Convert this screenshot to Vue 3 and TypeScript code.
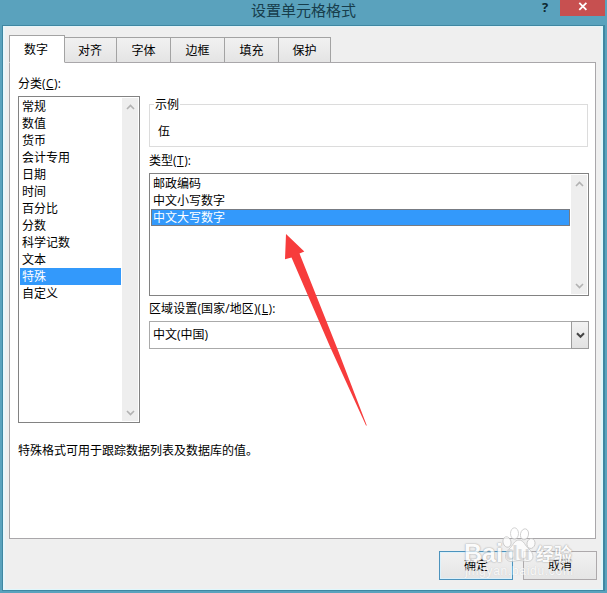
<script setup lang="ts">
import { ref } from 'vue'

interface Tab { label: string; width: number }

const tabs: Tab[] = [
  { label: '数字', width: 56 },
  { label: '对齐', width: 53 },
  { label: '字体', width: 54 },
  { label: '边框', width: 54 },
  { label: '填充', width: 54 },
  { label: '保护', width: 52 },
]
const categories: string[] = [
  '常规', '数值', '货币', '会计专用', '日期', '时间', '百分比',
  '分数', '科学记数', '文本', '特殊', '自定义',
]
const types: string[] = ['邮政编码', '中文小写数字', '中文大写数字']

const activeTab = ref('数字')
const category = ref('特殊')
const numberType = ref('中文大写数字')
</script>

<template>
  <div class="window">
    <header class="titlebar">
      <h1 class="title">设置单元格格式</h1>
      <div class="controls">
        <span class="help">?</span>
        <button class="close" type="button">
          <svg width="10" height="9" viewBox="0 0 10 9"><path d="M1.3 .8 8.4 7.9M8.4 .8 1.3 7.9" /></svg>
        </button>
      </div>
    </header>

    <main class="client">
      <nav class="tabs">
        <button
          v-for="tab in tabs"
          :key="tab.label"
          type="button"
          class="tab"
          :class="{ active: tab.label === activeTab }"
          :style="{ width: tab.width + 'px' }"
          @click="activeTab = tab.label"
        >{{ tab.label }}</button>
      </nav>

      <section class="panel">
        <div class="columns">
          <div class="left">
            <div class="label">分类(<u>C</u>):</div>
            <div class="listbox categories">
              <ul>
                <li
                  v-for="item in categories"
                  :key="item"
                  :class="{ selected: item === category }"
                  @click="category = item"
                >{{ item }}</li>
              </ul>
              <div class="scroll">
                <svg width="9" height="6" viewBox="0 0 9 6"><path d="M1 5 4.5 1.4 8 5" /></svg>
                <svg width="9" height="6" viewBox="0 0 9 6"><path d="M1 1 4.5 4.6 8 1" /></svg>
              </div>
            </div>
          </div>

          <div class="right">
            <fieldset class="sample">
              <legend>示例</legend>
              <div class="value">伍</div>
            </fieldset>
            <div class="label type-label">类型(<u>T</u>):</div>
            <div class="listbox types">
              <ul>
                <li
                  v-for="item in types"
                  :key="item"
                  :class="{ selected: item === numberType }"
                  @click="numberType = item"
                >{{ item }}</li>
              </ul>
              <div class="scroll">
                <svg width="9" height="6" viewBox="0 0 9 6"><path d="M1 5 4.5 1.4 8 5" /></svg>
                <svg width="9" height="6" viewBox="0 0 9 6"><path d="M1 1 4.5 4.6 8 1" /></svg>
              </div>
            </div>
            <div class="label locale-label">区域设置(国家/地区)(<u>L</u>):</div>
            <div class="combo">
              <span>中文(中国)</span>
              <button class="drop" type="button">
                <svg width="9" height="7" viewBox="0 0 9 7"><path d="M1 1.2 4.5 4.8 8 1.2" /></svg>
              </button>
            </div>
          </div>
        </div>
        <p class="hint">特殊格式可用于跟踪数据列表及数据库的值。</p>
      </section>

      <footer class="actions">
        <button class="btn primary" type="button">确定</button>
        <button class="btn" type="button">取消</button>
      </footer>
    </main>

    <svg class="arrow" width="84" height="194" viewBox="0 0 84 194">
      <path d="M2 0 20.3 17.5 15.5 19.5 53.2 114.3 82.8 191.5 82 191.5 46.7 114.3 7.5 23.5 1 25.3Z" />
    </svg>

    <div class="watermark">
      <svg class="paw" width="34" height="38" viewBox="0 0 34 38">
        <ellipse cx="12.5" cy="6.5" rx="4" ry="5.7" />
        <ellipse cx="22.5" cy="7.3" rx="4" ry="5.5" transform="rotate(12 22.5 7.3)" />
        <ellipse cx="5" cy="15" rx="4" ry="5.3" transform="rotate(-15 5 15)" />
        <ellipse cx="29" cy="16.5" rx="4" ry="5" transform="rotate(12 29 16.5)" />
        <path d="M17 13c-5 0-6 6-10 9-5 4-5 12 2 12.500 4 0 5-1 8-1s5 1 9 1c7-.5 6-8.500 1-12.500-4-3-5-9-10-9z" />
      </svg>
      <div class="brand">
        <span class="latin">Bai</span><span class="latin du">du</span><span class="cn">经验</span>
      </div>
      <div class="site">jingyan.baidu.com</div>
    </div>
  </div>
</template>

<style>
body {
  margin: 0;
  overflow: hidden;
}
</style>

<style scoped>
* {
  box-sizing: border-box;
}

.window {
  position: relative;
  display: flex;
  flex-direction: column;
  width: 607px;
  height: 593px;
  padding: 0 2px 2px;
  background: #5aa2bd;
  color: #000;
  font: 12px/17px "Open Sans", "Noto Sans CJK SC", sans-serif;
}

button {
  margin: 0;
  padding: 0;
  font: inherit;
  color: inherit;
}

.titlebar {
  position: relative;
  display: flex;
  flex: none;
  justify-content: center;
  height: 25px;
}

.title {
  margin: 0;
  font-size: 15px;
  line-height: 21px;
  font-weight: 400;
  color: #173d4b;
}

.controls {
  position: absolute;
  top: 0;
  right: 0;
  display: flex;
}

.help {
  width: 18px;
  font: 700 13px/14px "Open Sans", sans-serif;
  color: #0d2932;
}

.close {
  display: flex;
  justify-content: center;
  width: 45px;
  height: 16px;
  padding-top: 2px;
  border: 0;
  background: #c75050;
}

.close svg {
  fill: none;
  stroke: #fff;
  stroke-width: 1.8;
}

.client {
  display: flex;
  flex: 1;
  flex-direction: column;
  padding: 9px 7px 0 6px;
  border: 1px solid #3f87a2;
  border-right-width: 2px;
  background: #efefef;
  box-shadow: inset 2px 0 #e7f6fb, inset -2px 0 #e0f7fc, inset 0 -1px #e0f7fc, inset 0 1px #e6f4f8;
}

.tabs {
  display: flex;
  align-items: flex-end;
  height: 28px;
  margin-bottom: -1px;
}

.tab {
  height: 26px;
  padding-top: 1px;
  border: 1px solid #a3a3a3;
  border-left-width: 0;
  background: linear-gradient(#f1f1f1, #e4e4e4);
  line-height: 23px;
}

.tab.active {
  z-index: 1;
  height: 28px;
  margin-right: -1px;
  padding: 0 2px 0 0;
  border-left-width: 1px;
  border-bottom-color: #fff;
  background: #fff;
}

.panel {
  height: 477px;
  padding: 12px 6px 0 8px;
  border: 1px solid #a9a7aa;
  background: #fff;
}

.columns {
  display: flex;
  gap: 9px;
}

.left {
  width: 122px;
}

.right {
  flex: 1;
}

.label {
  white-space: nowrap;
}

.label u {
  padding: 0 .5px;
  text-underline-offset: 1px;
}

.listbox {
  display: flex;
  justify-content: space-between;
  padding: 1px;
  border: 1px solid #828282;
  background: #fff;
}

.categories {
  height: 327px;
  margin-top: 4px;
}

.listbox ul {
  flex: 1;
  margin: 0 1px 0 0;
  padding: 0;
  list-style: none;
}

.listbox li {
  height: 17px;
  padding-left: 2px;
}

.listbox li.selected {
  background: #3399fb;
  color: #fff;
}

.types li.selected {
  outline: 1px solid #777b82;
  outline-offset: -1px;
}

.scroll {
  display: flex;
  flex-direction: column;
  align-items: center;
  justify-content: space-between;
  width: 16px;
  padding: 6px 0 5px;
  background: #eee;
}

.scroll svg {
  fill: none;
  stroke: #b2b2b2;
  stroke-width: 1.6;
}

.sample {
  height: 51px;
  min-width: 0;
  margin: 21px 1px 0 0;
  padding: 0 8px;
  border: 1px solid #dcdcdc;
}

.sample legend {
  margin-left: -4px;
  padding: 0 1px;
}

.sample .value {
  margin-top: 10px;
}

.type-label {
  margin-top: 5px;
}

.types {
  height: 123px;
  margin-top: 4px;
}

.locale-label {
  margin-top: 4px;
  letter-spacing: .1px;
}

.combo {
  display: flex;
  justify-content: space-between;
  height: 28px;
  margin-top: 4px;
  padding-left: 3px;
  border: 1px solid #aaa;
  background: #fff;
  line-height: 26px;
}

.drop {
  display: flex;
  align-items: center;
  justify-content: center;
  width: 18px;
  height: 28px;
  margin: -1px -1px 0 0;
  border: 1px solid #9c9c9c;
  background: linear-gradient(#f3f3f3, #e2e2e2);
}

.drop svg {
  fill: none;
  stroke: #444;
  stroke-width: 2;
}

.hint {
  margin: 19px 0 0;
}

.actions {
  display: flex;
  gap: 10px;
  justify-content: flex-end;
  margin: 12px -1px 0 0;
}

.btn {
  width: 74px;
  height: 29px;
  border: 1px solid #ada9ab;
  background: linear-gradient(#f1f1f1, #e5e5e5);
}

.btn.primary {
  border-color: #4c93bd;
  box-shadow: inset 0 0 0 1px #dcf1fb;
}

.arrow {
  position: absolute;
  top: 234px;
  left: 284px;
  fill: #f73c3c;
}

.watermark {
  position: absolute;
  top: 527px;
  left: 464px;
  width: 115px;
  height: 52px;
  color: #fff;
  opacity: .75;
  pointer-events: none;
}

.paw {
  position: absolute;
  top: 0;
  left: 38px;
  fill: #fff;
  stroke: #bdbdbd;
  stroke-width: .9;
}

.brand {
  position: absolute;
  top: 14px;
  left: 0;
  display: flex;
  align-items: center;
  height: 24px;
  white-space: nowrap;
  text-shadow: 0 0 1.5px #999, 0 0 1.5px #999;
}

.latin {
  width: 39px;
  font: 700 25px/24px "Liberation Sans", sans-serif;
}

.du {
  width: 27px;
  margin-left: 2px;
  font-size: 21px;
  letter-spacing: -.5px;
  color: #d4d4d4;
  text-shadow: none;
}

.cn {
  margin-left: 4px;
  font: 700 18px/24px "Noto Sans CJK SC", sans-serif;
}

.site {
  position: absolute;
  top: 37px;
  left: 1px;
  font: 12px/15px "Liberation Sans", sans-serif;
  letter-spacing: .7px;
  text-shadow: 0 0 1px #bbb;
}
</style>
